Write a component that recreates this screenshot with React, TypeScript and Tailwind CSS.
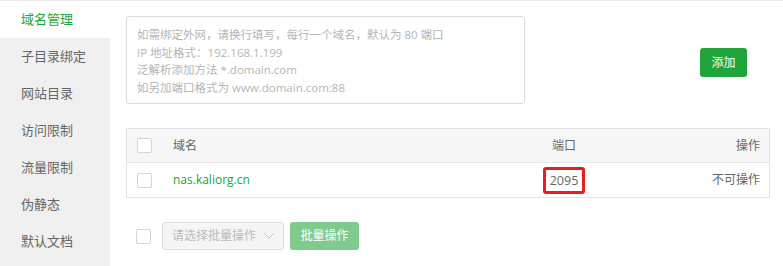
import React from 'react';

const menu = ['域名管理', '子目录绑定', '网站目录', '访问限制', '流量限制', '伪静态', '默认文档'];

const Check: React.FC = () => (
  <span className="block w-[15px] h-[15px] border border-[#d5d5d5] rounded-[2px] bg-white" />
);

const App: React.FC = () => {
  return (
    <div
      className="w-[783px] h-[266px] flex bg-white border-t border-[#ececec] overflow-hidden"
      style={{ fontFamily: '"Open Sans", "Noto Sans CJK SC", sans-serif' }}
    >
      {/* side menu */}
      <div className="w-[110px] flex flex-col shrink-0">
        {menu.map((m, i) => (
          <div
            key={m}
            className={
              i === 0
                ? 'h-[37px] flex items-center pl-[21px] text-[13px] text-[#20a53a] bg-white'
                : 'h-[37px] flex items-center pl-[21px] text-[13px] text-[#666] bg-[#f0f0f0]'
            }
          >
            {m}
          </div>
        ))}
        <div className="flex-1 bg-[#f0f0f0]" />
      </div>

      {/* content */}
      <div className="flex-1 pl-[16px] pr-[13px] pt-[15px]">
        <div className="flex items-center">
          <div className="w-[399px] h-[88px] border border-[#dcdcdc] rounded-[3px] px-[10px] pt-[9px] text-[11.5px] leading-[17.5px] text-[#b5b5b5]">
            <div>如需绑定外网，请换行填写，每行一个域名，默认为 80 端口</div>
            <div>IP 地址格式：192.168.1.199</div>
            <div>泛解析添加方法 *.domain.com</div>
            <div>如另加端口格式为 www.domain.com:88</div>
          </div>
          <button className="ml-[175px] mt-[5px] w-[47px] h-[29px] rounded-[3px] bg-[#20a53a] text-white text-[12px]">
            添加
          </button>
        </div>

        {/* table */}
        <div className="mt-[24px] border border-[#e2e2e2] text-[12px] text-[#666]">
          <div className="grid grid-cols-[46px_1fr_80px_165px] h-[34px] items-center bg-[#f6f6f6] border-b border-[#e8e8e8]">
            <div className="pl-[10px]"><Check /></div>
            <div>域名</div>
            <div className="text-center">端口</div>
            <div className="text-right pr-[9px]">操作</div>
          </div>
          <div className="grid grid-cols-[46px_1fr_80px_165px] h-[34px] items-center">
            <div className="pl-[10px]"><Check /></div>
            <div className="text-[#20a53a] text-[12px]">nas.kaliorg.cn</div>
            <div className="flex justify-center">
              <span className="border-[3px] border-[#e3201b] rounded-[3px] px-[4px] h-[27px] leading-[21px] text-[12.5px] text-[#666]">
                2095
              </span>
            </div>
            <div className="text-right pr-[9px]">不可操作</div>
          </div>
        </div>

        {/* batch */}
        <div className="mt-[24px] flex items-center pl-[10px]">
          <Check />
          <div className="ml-[11px] w-[122px] h-[28px] border border-[#dcdcdc] rounded-[3px] bg-[#f5f5f5] flex items-center justify-between px-[9px] text-[12px] text-[#bbb]">
            <span>请选择批量操作</span>
            <svg width="10" height="6" viewBox="0 0 10 6" fill="none" stroke="#c2c2c2" strokeWidth="1">
              <path d="M0.5 0.5L5 5L9.5 0.5" />
            </svg>
          </div>
          <button className="ml-[6px] w-[69px] h-[28px] rounded-[3px] bg-[#7fcb8e] text-white text-[12px]">
            批量操作
          </button>
        </div>
      </div>
    </div>
  );
};

export default App;
